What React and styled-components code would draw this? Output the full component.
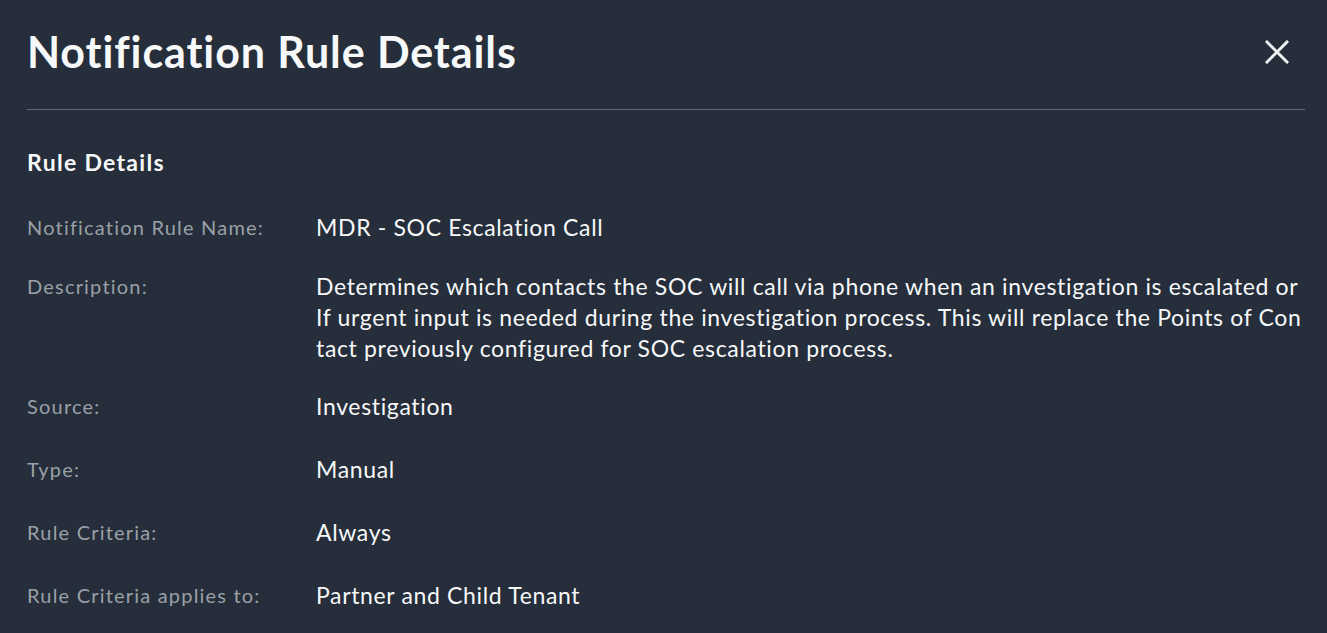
import React from 'react';
import styled, { createGlobalStyle } from 'styled-components';

const GlobalStyle = createGlobalStyle`
  html, body {
    margin: 0;
    padding: 0;
    background: #252e3a;
  }
  body {
    font-family: Lato, "Noto Sans", sans-serif;
    -webkit-font-smoothing: antialiased;
  }
`;

const Panel = styled.div`
  width: 1327px;
  height: 633px;
  box-sizing: border-box;
  padding: 0 22px 0 27px;
  background: #252e3a;
  color: #f7f8f9;
  overflow: hidden;
`;

const Header = styled.div`
  display: flex;
  align-items: center;
  justify-content: space-between;
  height: 110px;
  border-bottom: 1px solid #5f6772;
  box-sizing: border-box;
  padding-bottom: 6px;
`;

const Title = styled.h1`
  margin: 0;
  font-size: 43px;
  font-weight: 700;
  letter-spacing: 0.9px;
  color: #f7f8f9;
`;

const CloseButton = styled.button`
  width: 32px;
  height: 32px;
  margin-right: 12px;
  padding: 0;
  border: 0;
  background: none;
  cursor: pointer;
  display: flex;
  align-items: center;
  justify-content: center;
`;

const SectionTitle = styled.h2`
  margin: 37px 0 0;
  font-size: 23px;
  line-height: 30px;
  font-weight: 700;
  letter-spacing: 1.3px;
  color: #f7f8f9;
`;

const List = styled.div`
  margin-top: 35px;
`;

const Row = styled.div`
  display: grid;
  grid-template-columns: 289px 1fr;
  margin-top: ${p => p.$gap}px;
`;

const Label = styled.div`
  font-size: 20px;
  line-height: 31px;
  letter-spacing: 1.2px;
  color: #9aa0a7;
`;

const Value = styled.div`
  font-size: 23px;
  line-height: 31px;
  letter-spacing: 0.65px;
  color: #f7f8f9;
  word-break: break-all;
`;

const rows = [
  { label: 'Notification Rule Name:', value: 'MDR - SOC Escalation Call', gap: 0 },
  {
    label: 'Description:',
    value: 'Determines which contacts the SOC will call via phone when an investigation is escalated or If urgent input is needed during the investigation process. This will replace the Points of Contact previously configured for SOC escalation process.',
    gap: 28,
  },
  { label: 'Source:', value: 'Investigation', gap: 27 },
  { label: 'Type:', value: 'Manual', gap: 32 },
  { label: 'Rule Criteria:', value: 'Always', gap: 32 },
  { label: 'Rule Criteria applies to:', value: 'Partner and Child Tenant', gap: 32 },
];

const App = () => (
  <Panel>
    <GlobalStyle />
    <Header>
      <Title>Notification Rule Details</Title>
      <CloseButton aria-label="Close">
        <svg width="24" height="24" viewBox="0 0 24 24">
          <path d="M2 2 L22 22 M22 2 L2 22" stroke="#eef0f2" strokeWidth="3" strokeLinecap="square" />
        </svg>
      </CloseButton>
    </Header>
    <SectionTitle>Rule Details</SectionTitle>
    <List>
      {rows.map(r => (
        <Row key={r.label} $gap={r.gap}>
          <Label>{r.label}</Label>
          <Value>{r.value}</Value>
        </Row>
      ))}
    </List>
  </Panel>
);

export default App;
